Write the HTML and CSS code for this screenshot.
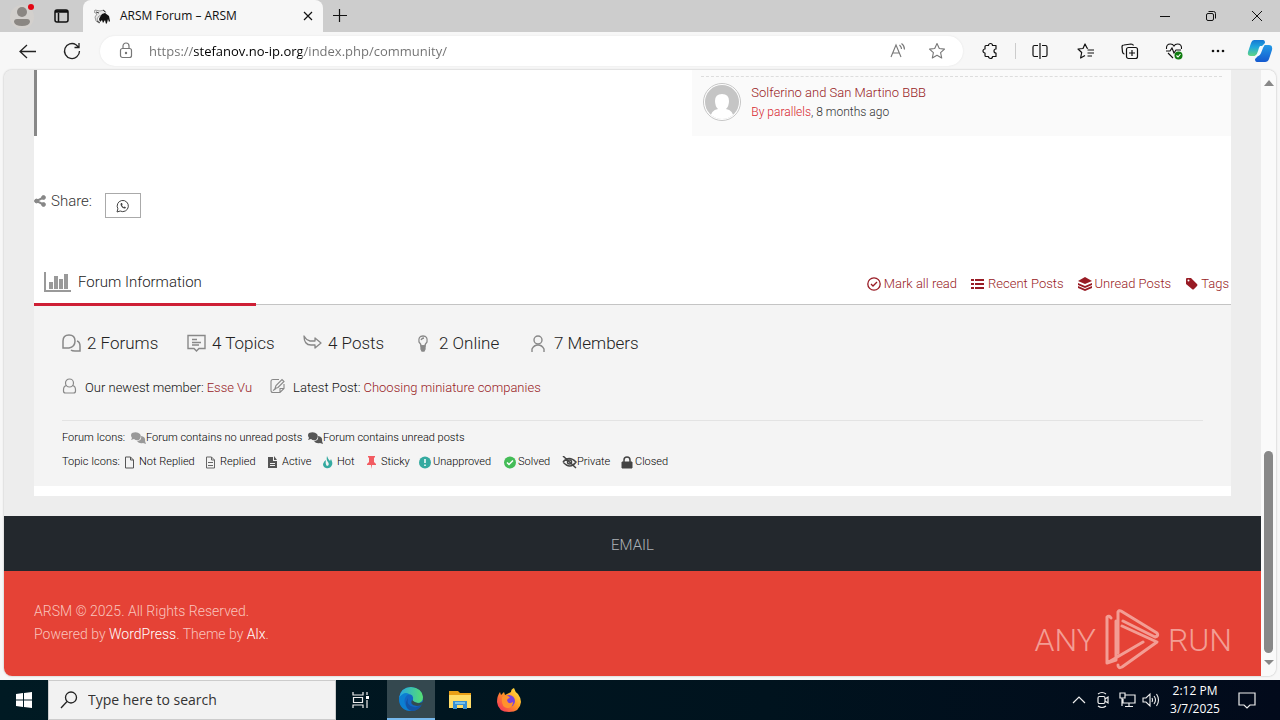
FILE: index.html
```html
<!DOCTYPE html>
<html lang="en">
<head>
<meta charset="utf-8">
<meta name="viewport" content="width=device-width, initial-scale=1">
<title>ARSM Forum – ARSM</title>
<link rel="stylesheet" href="styles.css">
</head>
<body>
<header class="tabbar">
  <button class="profile" aria-label="Profile"><svg width="28" height="28" viewBox="0 0 28 28"><circle cx="12" cy="15" r="12" fill="#d3d0cd"/><circle cx="12" cy="10" r="5" fill="#8b8783"/><path d="M4 20q0-3 3-3h10q3 0 3 3q-1 4-8 4t-8-4" fill="#8b8783"/><circle cx="21" cy="5" r="3" fill="#e30613"/></svg></button>
  <button class="workspaces" aria-label="Tab actions"><svg width="16" height="16" viewBox="0 0 16 16" fill="none" stroke="#111" stroke-width="1.5"><rect x="2" y="2" width="13" height="12" rx="2"/><path d="M2 4h13M2 3h13M5.500 5v9"/></svg></button>
  <div class="tab">
    <svg width="17" height="16" viewBox="0 0 17 16"><path d="M1 2l5 1 4-1 2 2-2 3-5 1-2 3 2 4-3-2-1-4 2-3-3-2z" fill="#e6e6e6" stroke="#888" stroke-width=".8"/><path d="M6 9l2-3 3-1 4 3 1 5-1 1-1-3-1 4-1 1-1-4-2 3-1-3-2 2-1-3z" fill="#111"/><path d="M2 4l3 1M9 2l2 2M3 13l3 2" stroke="#444"/></svg>
    <span class="tab-title">ARSM Forum – ARSM</span>
    <button aria-label="Close tab"><svg width="10" height="10" viewBox="0 0 10 10" stroke="#111" stroke-width="1.200"><path d="M1 1l8 8M9 1l-8 8"/></svg></button>
  </div>
  <button class="newtab" aria-label="New tab"><svg width="16" height="16" viewBox="0 0 16 16" stroke="#111" stroke-width="1.200"><path d="M1 7.500h14M7.500 1v13"/></svg></button>
  <div class="window-controls">
    <button aria-label="Minimize"><svg width="12" height="12" viewBox="0 0 12 12" stroke="#111"><path d="M1 6.500h10"/></svg></button>
    <button aria-label="Restore"><svg width="12" height="12" viewBox="0 0 12 12" fill="none" stroke="#111"><rect x="1.500" y="3.500" width="7" height="7" rx="1.500"/><path d="M3.500 1.500h5q2 0 2 2v5"/></svg></button>
    <button aria-label="Close"><svg width="12" height="12" viewBox="0 0 12 12" stroke="#111"><path d="M1 1l10 10M11 1L1 11"/></svg></button>
  </div>
</header>

<nav class="toolbar" aria-label="Browser">
  <button aria-label="Back"><svg width="20" height="20" viewBox="0 0 20 20" fill="none" stroke="#222" stroke-width="1.300"><path d="M18 10.500H2M9 4L2 10.500 9 17"/></svg></button>
  <button aria-label="Reload"><svg width="20" height="20" viewBox="0 0 20 20" fill="none" stroke="#222" stroke-width="1.300"><path d="M17.500 10A7.500 7.500 0 1 1 14 3.700L17 6.500M17 2v4.500h-4.500"/></svg></button>
  <div class="address">
    <svg width="16" height="18" viewBox="0 0 16 18" fill="none" stroke="#777" stroke-width="1.200"><rect x="2.500" y="6.500" width="11" height="9" rx="2"/><path d="M5 6.500V4a3 3 0 0 1 6 0v2.500"/><circle cx="8" cy="11" r=".6" fill="#777"/></svg>
    <input type="text" aria-label="Address" value="https://stefanov.no-ip.org/index.php/community/">
    <button aria-label="Read aloud"><svg width="18" height="18" viewBox="0 0 18 18" fill="none" stroke="#777" stroke-width="1.100"><path d="M2 15L7 3l5 12M3.500 11h7M10.500 3q2 2 2 4M12.500 1.500q3 2 3 6"/></svg></button>
    <button aria-label="Add to favorites"><svg width="18" height="18" viewBox="0 0 18 18" fill="none" stroke="#777" stroke-width="1.100" stroke-linejoin="round"><path d="M9 1.500l2.300 5 5.200.6-3.900 3.600 1.100 5.300L9 13.300 4.300 16l1.100-5.300L1.500 7.100l5.200-.6z"/></svg></button>
  </div>
  <div class="tools">
    <button aria-label="Extensions"><svg width="18" height="18" viewBox="0 0 18 18" fill="none" stroke="#111" stroke-width="1.200" stroke-linejoin="round"><path d="M5 3.500h2.500a2 2 0 0 1 4 0H15V7a2 2 0 0 0 0 4v3.500h-3.500a2 2 0 0 1-4 0H5q-1 0-1-1V11a2 2 0 0 1 0-4V4.500q0-1 1-1z"/></svg></button>
    <button class="divided" aria-label="Split screen"><svg width="18" height="18" viewBox="0 0 18 18" fill="none" stroke="#111" stroke-width="1.200"><path d="M7 3.500H3.500Q2 3.500 2 5v8q0 1.500 1.500 1.500H7M11 3.500h3.500Q16 3.500 16 5v8q0 1.500-1.500 1.500H11M9 1v16"/></svg></button>
    <button aria-label="Favorites"><svg width="18" height="18" viewBox="0 0 18 18" fill="none" stroke="#111" stroke-width="1.200" stroke-linejoin="round"><path d="M11 6.500L10 6 8 2 6 6.500 1 7l3.700 3.500L3.600 16 8 13.500M10.500 8H17M10.500 11H17M10.500 14H15"/></svg></button>
    <button aria-label="Collections"><svg width="18" height="18" viewBox="0 0 18 18" fill="none" stroke="#111" stroke-width="1.200"><rect x="5.500" y="5.500" width="11" height="11" rx="2"/><path d="M11 8v6M8 11h6M3.500 12Q2 12 1.500 10L1 5q0-2 2-2l7-1q2 0 2.500 1.500"/></svg></button>
    <button aria-label="Browser essentials"><svg width="18" height="18" viewBox="0 0 18 18" fill="none" stroke="#111" stroke-width="1.100"><path d="M1.500 7Q1 2 5.500 2 8 2 9 4q1-2 3.500-2Q17 2 16.500 7M1 9h4l2-3 2 5 2-3h5M3 11l5 5"/><circle cx="13.500" cy="13.500" r="4" fill="#107c10" stroke="none"/><path d="M11.500 13.500l1.500 1.500 2.500-3" stroke="#fff"/></svg></button>
    <button aria-label="More"><svg width="18" height="18" viewBox="0 0 18 18" fill="#111"><circle cx="4" cy="9" r="1.300"/><circle cx="9" cy="9" r="1.300"/><circle cx="14" cy="9" r="1.300"/></svg></button>
    <button aria-label="Copilot"><svg width="26" height="24" viewBox="0 0 26 24"><defs><linearGradient id="cop-a" x2="0" y2="1"><stop stop-color="#1478d4"/><stop offset=".45" stop-color="#20a7dc"/><stop offset="1" stop-color="#61d583"/></linearGradient><linearGradient id="cop-b" x2="0" y2="1"><stop stop-color="#239be6"/><stop offset="1" stop-color="#1459cf"/></linearGradient></defs><path d="M7 1h9q2 0 2 3l-3 3-4 7q-1 3-4 3H4q-4 0-3-4L4 4q1-3 3-3" fill="url(#cop-a)"/><path d="M18 6h4q4 0 3 5l-3 9q-1 3-4 3h-8q-2 0-2-3l3-3q2 0 3-3l2-5q1-3 2-3" fill="url(#cop-b)"/><path d="M13 7h4q-2 1-3 5-1 5-4 5H8q2-1 3-5 1-4 2-5" fill="#f2fbff"/></svg></button>
  </div>
</nav>

<div class="browser-view">
<div class="page">
  <main class="content">
    <div class="top">
      <div class="quote"></div>
      <aside class="recent">
        <article class="post">
          <svg width="38" height="38" viewBox="0 0 38 38"><clipPath id="face"><circle cx="19" cy="19" r="17"/></clipPath><circle cx="19" cy="19" r="18.500" fill="#fff" stroke="#c6c6c6"/><g clip-path="url(#face)"><path d="M0 0h38v38H0z" fill="#c5c5c5"/><path d="M7 38q0-11 8-12-3-3-3-8 0-7 7-7t7 7q0 5-3 8 8 1 8 12z" fill="#fff"/></g></svg>
          <div><a href="#">Solferino and San Martino BBB</a><p><a class="author" href="#">By parallels</a>, 8 months ago</p></div>
        </article>
      </aside>
    </div>

    <div class="share">
      <svg width="12" height="12" viewBox="0 0 12 12" fill="#888" stroke="#888"><path d="M9.500 2.500L2.500 6l7 3.500" fill="none" stroke-width="2"/><circle cx="9.500" cy="2.500" r="1.900"/><circle cx="2.500" cy="6" r="1.900"/><circle cx="9.500" cy="9.500" r="1.900"/></svg>
      <span>Share:</span>
      <button aria-label="Share on WhatsApp"><svg width="14" height="14" viewBox="0 0 14 14" fill="none" stroke="#444"><path d="M1 13l.9-3.200A5.600 5.600 0 1 1 4.200 12z"/><path d="M5 4q-1 1 0 3 2 3 4 2.500 1.200-.3.800-1.200L8.500 7.500l-.8.700Q6.500 7.500 6 6.300l.6-.8L6 4z" fill="#444" stroke="none"/></svg></button>
    </div>

    <div class="info-head">
      <h2><svg width="28" height="22" viewBox="0 0 28 22" fill="#999"><path d="M0 1h2v18h25v2H0zM5 11h4v7H5zM10 5h4v13h-4zM15 8h4v10h-4zM20 3h4v15h-4z"/></svg>Forum Information</h2>
      <ul class="actions">
        <li><a href="#"><svg width="14" height="14" viewBox="0 0 14 14" fill="none" stroke="#981b24" stroke-width="1.300"><circle cx="7" cy="7" r="6.200"/><path d="M4 7l2 2 4-4"/></svg>Mark all read</a></li>
        <li><a href="#"><svg width="14" height="14" viewBox="0 0 14 14" fill="#981b24"><path d="M0 2h3v2H0zM0 6h3v2H0zM0 10h3v2H0zM4 2h9v2H4zM4 6h9v2H4zM4 10h9v2H4z"/></svg>Recent Posts</a></li>
        <li><a href="#"><svg width="14" height="14" viewBox="0 0 14 14" fill="#981b24"><path d="M0 4l7-4 7 4-7 3zM0 6l7 3 7-3v2l-7 3-7-3zM0 9l7 3 7-3v2l-7 3-7-3z"/></svg>Unread Posts</a></li>
        <li><a href="#"><svg width="13" height="14" viewBox="0 0 13 14" fill="#981b24"><path d="M1 2q0-1 1-1h4l6 6q1 1 0 2l-3 3q-1 1-2 0L1 7z"/><circle cx="3.500" cy="3.500" r="1" fill="#fff"/></svg>Tags</a></li>
      </ul>
    </div>

    <section class="panel">
      <ul class="stats">
        <li><svg width="19" height="19" viewBox="0 0 19 19" fill="none" stroke="#888" stroke-width="1.500"><path d="M1 14V7q0-6 6-6t6 6-6 7zM15 7q3 1 3 5v5h-5q-3 0-4-1"/></svg>2 Forums</li>
        <li><svg width="19" height="19" viewBox="0 0 19 19" fill="none" stroke="#888" stroke-width="1.400"><path d="M1 1.500h17v13h-6L9.500 17 7 14.500H1zM5 5.500h5M5 8.500h9M5 11h7"/></svg>4 Topics</li>
        <li><svg width="19" height="19" viewBox="0 0 19 19" fill="none" stroke="#888" stroke-width="1.300" stroke-linejoin="round"><path d="M1 2q2 4 6 5h5V4l6 5-6 5v-3H8Q1 11 1 2z"/></svg>4 Posts</li>
        <li><svg width="16" height="19" viewBox="0 0 16 19" fill="none" stroke="#888" stroke-width="1.300"><path d="M6 12q0-2-2-4-1-6 4-6t4 6q-2 2-2 4zM6 6q1-2 3-2"/><path d="M6 12h4v3l-1 2H7l-1-2z" fill="#888"/></svg>2 Online</li>
        <li><svg width="16" height="19" viewBox="0 0 16 19" fill="none" stroke="#888" stroke-width="1.400"><circle cx="8" cy="6" r="4"/><path d="M2 18v-3q2-4 6-4t6 4v3"/></svg>7 Members</li>
      </ul>
      <div class="newest">
        <span><svg width="15" height="16" viewBox="0 0 15 16" fill="none" stroke="#888" stroke-width="1.200"><circle cx="7.500" cy="5" r="4"/><path d="M4.500 7.500Q1.500 8 1.500 12v1q0 2 2 2h8q2 0 2-2v-1q0-4-3-4.500"/></svg>Our newest member: <a href="#">Esse Vu</a></span>
        <span><svg width="15" height="16" viewBox="0 0 15 16" fill="none" stroke="#888" stroke-width="1.100"><path d="M9 1.500H3q-2 0-2 2v9q0 2 2 2h7l4-4V6M5 10.500l1-3 6-6 2 2-6 6zM10 14.500v-4h4M3 12.500l3-2"/></svg>Latest Post: <a href="#">Choosing miniature companies</a></span>
      </div>
      <div class="legend">
        <ul class="forum-icons">
          <li>Forum Icons:</li>
          <li><svg width="15" height="13" viewBox="0 0 15 13" fill="#999"><path d="M1 1q5-2 8 1 2 3-1 6-3 1-5-1l-3 1 1-2Q-1 3 1 1M10 4q5 1 4 5l1 3-3-1q-4 1-6-2 5 0 4-5"/></svg>Forum contains no unread posts</li>
          <li><svg width="15" height="13" viewBox="0 0 15 13" fill="#555"><path d="M1 1q5-2 8 1 2 3-1 6-3 1-5-1l-3 1 1-2Q-1 3 1 1M10 4q5 1 4 5l1 3-3-1q-4 1-6-2 5 0 4-5"/></svg>Forum contains unread posts</li>
        </ul>
        <ul class="topic-icons">
          <li>Topic Icons:</li>
          <li><svg width="11" height="13" viewBox="0 0 11 13" fill="none" stroke="#555"><path d="M1.500 1h5l3 3v8h-8zM6.500 1v3h3"/></svg>Not Replied</li>
          <li><svg width="11" height="13" viewBox="0 0 11 13" fill="none" stroke="#666"><path d="M1.500 1h5l3 3v8h-8zM6.500 1v3h3M3 6.500h5M3 9.500h5"/></svg>Replied</li>
          <li><svg width="11" height="13" viewBox="0 0 11 13"><path d="M1 1h5v4h4v7H1zM7 0l3 4H7z" fill="#555"/><path d="M3 7.500h5M3 9.500h5" stroke="#eee"/></svg>Active</li>
          <li><svg width="11" height="13" viewBox="0 0 11 13" fill="#35aaa0"><path d="M5 0q1 3 3 5l1-2q2 4 1 6-2 4-6 3-3-1-3-4 1-3 3-4Q3 8 5 10q3-1 1-4Q4 4 5 0"/></svg>Hot</li>
          <li><svg width="11" height="13" viewBox="0 0 11 13" fill="#f25b61"><path d="M2 0h7v1L8 2v4l2 2v1H6l-.5 4L5 9H1V8l2-2V2L2 1z"/></svg>Sticky</li>
          <li><svg width="12" height="13" viewBox="0 0 12 13"><circle cx="6" cy="6.500" r="6" fill="#35aaa0"/><path d="M6 3v4M6 8.500V10" stroke="#fff" stroke-width="1.500"/></svg>Unapproved</li>
          <li><svg width="12" height="13" viewBox="0 0 12 13"><circle cx="6" cy="6.500" r="6" fill="#44bc57"/><path d="M3 6.500l2 2 4-4" fill="none" stroke="#fff" stroke-width="1.500"/></svg>Solved</li>
          <li><svg width="15" height="13" viewBox="0 0 15 13" fill="none" stroke="#444" stroke-width="1.500"><path d="M1 6q6-7 13 0-6 8-13 0M1 0l13 12"/><circle cx="7.500" cy="6" r="2"/></svg>Private</li>
          <li><svg width="12" height="13" viewBox="0 0 12 13"><path d="M1 6h10v6H1z" fill="#444" stroke="#444" stroke-linejoin="round"/><path d="M3 6V4q0-3 3-3t3 3v2" fill="none" stroke="#444" stroke-width="1.500"/></svg>Closed</li>
        </ul>
      </div>
    </section>
  </main>

  <footer>
    <nav class="footer-nav"><a href="#">EMAIL</a><button class="to-top" aria-label="Back to top"><svg width="32" height="22" viewBox="0 0 32 22" fill="none" stroke="#dddfe1" stroke-width="4" stroke-linecap="round"><path d="M4 18L16 6l12 12"/></svg></button></nav>
    <div class="credits">
      <p>ARSM © 2025. All Rights Reserved.<br>Powered by <a href="#">WordPress</a>. Theme by <a href="#">Alx</a>.</p>
      <div class="watermark"><span>ANY</span><svg width="56" height="62" viewBox="0 0 56 62" fill="none" stroke="currentColor" stroke-width="3" stroke-linejoin="round" stroke-linecap="round"><path d="M7 9Q5 6 3 8v46l36-21M14 44V3q1-2 3-1l36 22q2 3-2 4L19 12M18 17l35 16-35 25q-4 2-4-2M3 54l9-3V12"/></svg><span>RUN</span></div>
    </div>
  </footer>
</div>
<div class="scrollbar"><svg width="10" height="8" viewBox="0 0 10 8"><path d="M0 7l5-6 5 6z" fill="#888"/></svg><div class="track"><div class="thumb"></div></div><svg width="10" height="8" viewBox="0 0 10 8"><path d="M0 1l5 5 5-5z" fill="#888"/></svg></div>
</div>

<div class="taskbar">
  <button class="start" aria-label="Start"><svg width="16" height="16" viewBox="0 0 16 16" fill="#fff"><path d="M0 2l7-1v6.500H0zM8 1l8-1v7.500H8zM0 8.500h7V15l-7-1zM8 8.500h8V16l-8-1z"/></svg></button>
  <label class="search"><svg width="18" height="18" viewBox="0 0 18 18" fill="none" stroke="#222" stroke-width="1.300"><circle cx="11" cy="6.500" r="5.500"/><path d="M7 10.500L1 17"/></svg><input type="text" aria-label="Search" placeholder="Type here to search"></label>
  <button class="task-view" aria-label="Task view"><svg width="18" height="18" viewBox="0 0 18 18" fill="none" stroke="#eee" stroke-width="1.200"><path d="M1 1v3h10V1M1 17v-3h10v3M1.500 6.500h9v5h-9zM15 1v3M15 9v8"/><path d="M14 5h3v3h-3z" fill="#fff" stroke="none"/></svg></button>
  <button class="active" aria-label="Edge"><svg width="26" height="26" viewBox="0 0 26 26"><defs><linearGradient id="edge-g"><stop stop-color="#25a5e4"/><stop offset="1" stop-color="#56df70"/></linearGradient></defs><circle cx="13" cy="13" r="12" fill="#1266c4"/><path d="M1 12Q3 1 13 1q11 1 12 10 0 6-6 6-6 0-4-3 1-6-5-6-6 0-9 4" fill="url(#edge-g)"/><path d="M1 12q5-7 10-4-6 3-4 10 2 6 7 7Q1 25 1 12" fill="#0c7fd1"/><path d="M10 12q-2 8 6 9 4 1 8-3-3 7-10 7-7-2-6-9z" fill="#1454a5"/><path d="M14 14q-3 5 5 6 3 0 6-2v-2q-6 3-11-2" fill="#334b50"/></svg></button>
  <button aria-label="File Explorer"><svg width="24" height="22" viewBox="0 0 24 22"><path d="M1 2h9l2 2h11v15H1z" fill="#e99f17"/><path d="M1 6h22v13H1z" fill="#ffdc68"/><path d="M5 12h14v8h-4v-4H9v4H5z" fill="#3790d5"/><path d="M7 13h10v2H7z" fill="#78c2eb"/></svg></button>
  <button aria-label="Firefox"><svg width="26" height="26" viewBox="0 0 26 26"><defs><linearGradient id="fox" x1="1" x2="0" y2="1"><stop stop-color="#fff34a"/><stop offset=".45" stop-color="#ff9b22"/><stop offset="1" stop-color="#f32263"/></linearGradient></defs><path d="M4 5l1 3 3-3 1 3 6-3q0-3 3-4 1 4 4 6 3 4 3 8-1 10-12 10T1 15Q1 9 4 5" fill="url(#fox)"/><circle cx="13" cy="14" r="6" fill="#7843dc"/><path d="M6 10q5-4 8 1-2 0-3 2 1 5 6 2 0 6-6 6-6-1-5-11" fill="#ff922d"/></svg></button>
  <div class="tray">
    <button aria-label="Show hidden icons"><svg width="14" height="14" viewBox="0 0 14 14" fill="none" stroke="#eee" stroke-width="1.200"><path d="M1 10l6-6 6 6"/></svg></button>
    <button aria-label="Meet now"><svg width="14" height="18" viewBox="0 0 14 18" fill="none" stroke="#eee" stroke-width="1.200"><rect x="2" y="5.500" width="7" height="7" rx="1.500"/><path d="M9 8l3-2v6l-3-2M2 3q4-3 8 0M2 15q4 3 8 0"/></svg></button>
    <button aria-label="Network"><svg width="17" height="16" viewBox="0 0 17 16" fill="none" stroke="#eee" stroke-width="1.200"><path d="M6 3h10v8H4V7M10 11v3M6 14.500h8M1 1h5v5H1zM3 6v8"/></svg></button>
    <button aria-label="Volume"><svg width="18" height="16" viewBox="0 0 18 16" fill="none" stroke="#eee" stroke-width="1.100"><path d="M1 6h3l4-4v12l-4-4H1zM10 6q1 2 0 4M12 4q3 4 0 8M14.500 2q4 6 0 12"/></svg></button>
    <button class="clock"><span>2:12 PM</span><span>3/7/2025</span></button>
    <button aria-label="Notifications"><svg width="18" height="18" viewBox="0 0 18 18" fill="none" stroke="#eee" stroke-width="1.200"><path d="M1 2h16v12h-5l-3 3-3-3H1z"/></svg></button>
  </div>
</div>
</body>
</html>
```

FILE: styles.css
```css
* { box-sizing: border-box; }
body { margin: 0; min-height: 100vh; display: flex; flex-direction: column; background: #f7f7f7; color: #333; font: 14px/20px Roboto, "Liberation Sans", sans-serif; font-weight: 300; }
button { display: flex; align-items: center; justify-content: center; padding: 0; border: 0; background: none; font: inherit; color: inherit; }
svg { display: block; flex: none; }
ul, p, h2 { margin: 0; padding: 0; list-style: none; }
a { color: #981b24; text-decoration: none; }
input { border: 0; outline: 0; padding: 0; background: none; min-width: 0; }

.tabbar { display: flex; height: 32px; background: #cdcdcd; font-family: "Open Sans", "Noto Sans", sans-serif; }
.profile { width: 48px; }
.workspaces { width: 25px; margin-right: 10px; }
.tab { display: flex; align-items: center; gap: 9px; width: 240px; padding: 0 10px 0 11px; border-radius: 8px 8px 0 0; background: #f7f7f7; color: #111; font-size: 12px; font-weight: 400; }
.tab-title { flex: 1; white-space: nowrap; }
.newtab { width: 34px; }
.window-controls { display: flex; margin-left: auto; }
.window-controls button { width: 46px; }

.toolbar { display: flex; align-items: center; height: 38px; padding-left: 6px; background: #f7f7f7; }
.toolbar > button { width: 44px; height: 32px; }
.address { display: flex; flex: 1; align-items: center; height: 30px; margin: 0 5px 0 6px; padding: 0 7px 0 18px; border-radius: 15px; background: #fff; box-shadow: 0 0 2px #e2e2e2; }
.address input { flex: 1; margin-left: 15px; height: 24px; font: 13px/24px "Open Sans", "Noto Sans", sans-serif; background: linear-gradient(90deg, #707070 44px, #000 44px, #000 153px, #707070 153px); background-clip: text; -webkit-background-clip: text; -webkit-text-fill-color: transparent; }
.address button { width: 39px; height: 28px; }
.tools { display: flex; }
.tools button { width: 44px; height: 28px; }
.tools .divided { width: 52px; padding-left: 4px; background: linear-gradient(#ccc, #ccc) 3px 6px / 1px 16px no-repeat; }
.tools button:last-child { width: 40px; }

.browser-view { display: flex; flex: 1; margin: 0 4px 4px; border-radius: 8px; overflow: hidden; box-shadow: 0 0 2px #aaa; }
.page { display: flex; flex: 1; flex-direction: column; min-width: 0; background: #ededed; }
.content { margin: 0 30px 20px; padding-bottom: 10px; background: #fff; }
.top { display: flex; height: 66px; }
.quote { flex: 1; border-left: 3px solid #888; }
.recent { width: 45%; padding: 6px 9px 0; background: #fafafa; }
.post { display: flex; gap: 10px; padding: 6px 2px; border-top: 1px dashed #ddd; font-size: 13px; line-height: 20px; }
.post p { font-size: 12px; line-height: 18px; }
.post .author { color: #d71f2d; }

.share { display: flex; align-items: flex-start; gap: 5px; padding: 55px 0 0; font-size: 15px; color: #333; }
.share > svg { margin-top: 4px; }
.share button { width: 36px; height: 25px; margin: 2px 0 0 8px; border: 1px solid #aaa; }
.info-head { display: flex; justify-content: space-between; height: 87px; border-bottom: 1px solid #c4c4c4; }
.info-head h2 { display: flex; align-items: center; gap: 6px; width: 222px; padding: 42px 0 0 10px; border-bottom: 3px solid #ce1f35; margin-bottom: -2px; font-size: 15px; font-weight: 300; color: #222; }
.actions { display: flex; gap: 14px; padding: 56px 2px 0 0; font-size: 13px; }
.actions a { display: flex; align-items: center; gap: 3px; }

.panel { padding: 27px 28px 12px; background: #f4f4f4; }
.stats { display: grid; grid-template-columns: 125px 116px 112px 115px auto; font-size: 17px; line-height: 22px; color: #222; }
.stats li { display: flex; align-items: center; gap: 6px; }
.stats li:nth-child(n+4) { gap: 8px; }
.newest { display: flex; gap: 18px; margin-top: 24px; padding-bottom: 22px; border-bottom: 1px solid #e3e3e3; font-size: 13px; color: #111; }
.newest span { display: flex; align-items: center; gap: 3px; }
.newest svg { margin: 0 5px 4px 0; }
.legend { padding-top: 5px; font-size: 11px; line-height: 24px; color: #000; white-space: nowrap; }
.legend ul { display: grid; }
.forum-icons { grid-template-columns: 69px 177px auto; }
.topic-icons { grid-template-columns: 62px 81px 62px 55px 44px 53px 85px 58px 59px auto; }
.legend li { display: flex; align-items: center; gap: 4px; }
.forum-icons li { gap: 0; }
.topic-icons li:nth-child(n+7) { gap: 2px; }
.topic-icons li:nth-child(9) { gap: 0; }

footer { display: flex; flex: 1; flex-direction: column; font-size: 15px; }
.footer-nav { position: relative; display: flex; justify-content: center; height: 55px; padding-top: 19px; background: #23282d; }
.footer-nav a { color: #aeb2b6; }
.to-top { position: absolute; top: 55px; left: 50%; width: 80px; height: 30px; margin-left: -40px; border-radius: 0 0 3px 3px; background: #23282d; padding-bottom: 12px; }
.credits { position: relative; flex: 1; padding: 29px 30px; background: #e54236; color: #f9c4bd; font-size: 14px; line-height: 23px; }
.credits a { color: #fff; }
.watermark { position: absolute; right: 29px; top: 38px; display: flex; align-items: center; gap: 8px; color: #f39d94; font-size: 32px; line-height: 62px; }
.scrollbar { display: flex; flex-direction: column; align-items: center; justify-content: space-between; width: 15px; padding: 9px 0; background: #fafafa; }
.track { display: flex; flex: 1; align-items: flex-end; padding: 5px 0 6px; }
.thumb { width: 9px; height: 36%; border-radius: 5px; background: #888; }

.taskbar { display: flex; height: 40px; background: linear-gradient(90deg, #001a23, #00131e 60%, #020a1b); color: #fff; font-family: "Open Sans", "Noto Sans", sans-serif; font-weight: 400; }
.taskbar > button { width: 49px; }
.taskbar .start { width: 48px; }
.search { display: flex; align-items: center; gap: 10px; width: 288px; padding-left: 11px; border: 1px solid #ccc; background: #f2f2f2; }
.search input { flex: 1; font: 14px/20px "Open Sans", "Noto Sans", sans-serif; }
.search input::placeholder { color: #333; opacity: 1; }
.taskbar .task-view { width: 51px; padding-right: 2px; }
.taskbar .active { width: 48px; background: #34484f; border-bottom: 2px solid #76b9ed; }
.tray { display: flex; margin-left: auto; padding-right: 13px; }
.tray button { width: 24px; }
.tray .clock { flex-direction: column; width: 64px; font-size: 12px; line-height: 18px; }
.tray button:last-child { width: 40px; }
```
